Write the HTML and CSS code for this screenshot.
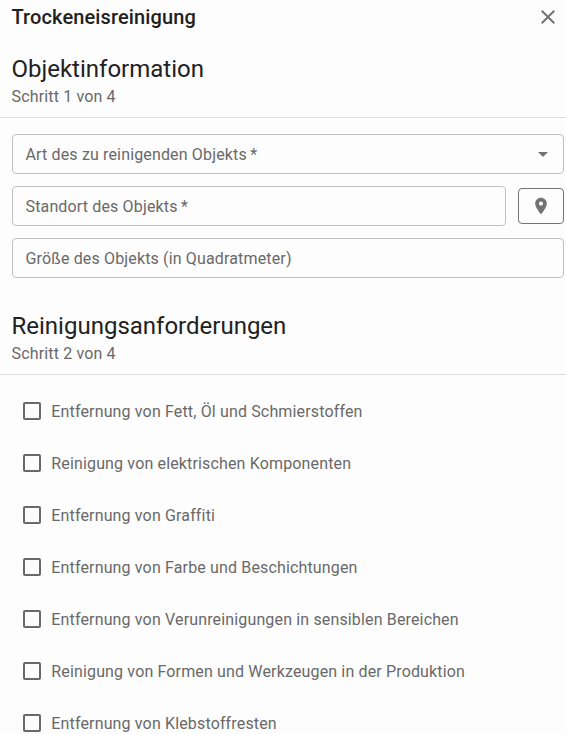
FILE: index.html
```
<!DOCTYPE html>
<html lang="de">
<head>
    <meta charset="UTF-8">
    <meta name="viewport" content="width=device-width, initial-scale=1.0">
    <title>Trockeneisreinigung</title>
    <link rel="stylesheet" href="styles.css">
</head>
<body>
    <form class="dialog">
        <header class="dialog-header">
            <h1>Trockeneisreinigung</h1>
            <button type="button" class="close-btn" aria-label="Schließen">
                <svg viewBox="0 0 24 24"><path d="M19 6.41 17.59 5 12 10.59 6.41 5 5 6.41 10.59 12 5 17.59 6.41 19 12 13.41 17.59 19 19 17.59 13.41 12z"/></svg>
            </button>
        </header>

        <!-- Step 1 -->
        <section class="step">
            <div class="step-header">
                <h2>Objektinformation</h2>
                <p>Schritt 1 von 4</p>
            </div>
            <div class="fields">
                <div class="field">
                    <span>Art des zu reinigenden Objekts&thinsp;*</span>
                    <svg class="arrow" viewBox="0 0 24 24"><path d="m7 10 5 5 5-5z"/></svg>
                </div>
                <div class="field-row">
                    <div class="field">
                        <span>Standort des Objekts&thinsp;*</span>
                    </div>
                    <button type="button" class="location-btn" aria-label="Standort">
                        <svg viewBox="0 0 24 24"><path d="M12 2C8.13 2 5 5.13 5 9c0 5.25 7 13 7 13s7-7.75 7-13c0-3.87-3.13-7-7-7m0 9.5c-1.38 0-2.5-1.12-2.5-2.5s1.12-2.5 2.5-2.5 2.5 1.12 2.5 2.5-1.12 2.5-2.5 2.5"/></svg>
                    </button>
                </div>
                <div class="field">
                    <span>Größe des Objekts (in Quadratmeter)</span>
                </div>
            </div>
        </section>

        <!-- Step 2 -->
        <section class="step">
            <div class="step-header">
                <h2>Reinigungsanforderungen</h2>
                <p>Schritt 2 von 4</p>
            </div>
            <div class="options">
                <label class="option"><input type="checkbox"><span>Entfernung von Fett, Öl und Schmierstoffen</span></label>
                <label class="option"><input type="checkbox"><span>Reinigung von elektrischen Komponenten</span></label>
                <label class="option"><input type="checkbox"><span>Entfernung von Graffiti</span></label>
                <label class="option"><input type="checkbox"><span>Entfernung von Farbe und Beschichtungen</span></label>
                <label class="option"><input type="checkbox"><span>Entfernung von Verunreinigungen in sensiblen Bereichen</span></label>
                <label class="option"><input type="checkbox"><span>Reinigung von Formen und Werkzeugen in der Produktion</span></label>
                <label class="option"><input type="checkbox"><span>Entfernung von Klebstoffresten</span></label>
            </div>
        </section>
    </form>
</body>
</html>
```

FILE: styles.css
```
/* global styles */
* {
    margin: 0;
    padding: 0;
    box-sizing: border-box;
}

body {
    height: 100vh;
    overflow: hidden;
    background: #fdfdfd;
    color: #696969;
    font-family: Roboto, sans-serif;
    font-size: 16px;
    letter-spacing: 0.15px;
}

button {
    background: none;
    cursor: pointer;
}

svg {
    display: block;
    fill: #737373;
}

/* title bar */
.dialog-header {
    display: flex;
    justify-content: space-between;
    align-items: center;
    height: 34px;
    padding: 0 6px 0 11.5px;
}

.dialog-header h1 {
    color: #212121;
    font-size: 20px;
    font-weight: 500;
    line-height: 32px;
    letter-spacing: 0.12px;
}

.close-btn {
    border: none;
}

.close-btn svg {
    width: 24px;
    height: 24px;
}

/* step heading */
.step-header {
    height: 84px;
    padding: 19px 12px 0 11.5px;
    border-bottom: 1px solid #dfdfdf;
}

.step-header h2 {
    color: #212121;
    font-size: 24px;
    font-weight: 400;
    line-height: 32px;
    letter-spacing: 0;
}

.step-header p {
    line-height: 24px;
}

/* inputs */
.fields {
    display: flex;
    flex-direction: column;
    gap: 12px;
    padding: 16px 2px 13px 12px;
}

.field {
    display: flex;
    flex: 1;
    justify-content: space-between;
    align-items: center;
    min-height: 40px;
    padding: 0 8px 0 12.5px;
    border: 1px solid #c0c0c0;
    border-radius: 4px;
}

.field-row {
    display: flex;
    align-items: center;
    gap: 12px;
}

.arrow {
    width: 24px;
    height: 24px;
}

.location-btn {
    display: flex;
    justify-content: center;
    align-items: center;
    width: 46px;
    height: 36px;
    border: 1px solid #737373;
    border-radius: 4px;
}

.location-btn svg {
    width: 20px;
    height: 20px;
}

/* checkboxes */
.options {
    padding: 10px 12px 0 23px;
}

.option {
    display: flex;
    align-items: center;
    gap: 10.3px;
    height: 52px;
}

.option input {
    appearance: none;
    width: 18px;
    height: 18px;
    border: 2px solid #696969;
    border-radius: 2px;
}
```
